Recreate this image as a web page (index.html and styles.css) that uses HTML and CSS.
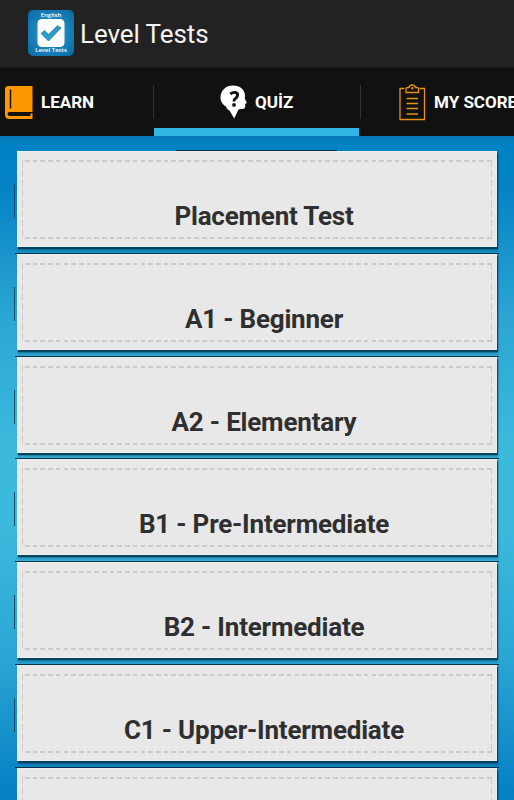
FILE: index.html
```
<!DOCTYPE html>
<html lang="en">
<head>
  <meta charset="UTF-8" />
  <meta name="viewport" content="width=device-width, initial-scale=1.0"/>
  <title>Level Tests</title>
  <link rel="stylesheet" href="styles.css">
</head>
<body>
  <header class="action-bar">
    <div class="app-icon">
      <span>English</span>
      <svg width="28" height="28" viewBox="0 0 28 28">
        <rect x="0.5" y="0" width="27" height="28" rx="4.5" fill="#fff"/>
        <path d="M4 14.5l3.5-3 4 4L20.500 6.500l3.500 2.500L11.500 22z" fill="#2b9ccb" stroke="#1979a8" stroke-width="0.7"/>
      </svg>
      <span>Level Tests</span>
    </div>
    <h1>Level Tests</h1>
  </header>

  <nav class="tabs">
    <a class="tab tab-learn">
      <svg width="29" height="35" viewBox="0 0 29 35">
        <path d="M4.500 1H28.500V27H6Q3.500 27 3.500 29t2.500 2H26.500V28.500H28.500V34H5.500Q1 34 1 29.500V4.500Q1 1 4.500 1z" fill="#ff9800"/>
        <path d="M6.500 4.500V23.500" stroke="#111" stroke-width="1.500"/>
      </svg>
      <span>LEARN</span>
    </a>
    <a class="tab tab-quiz active">
      <svg width="28" height="35" viewBox="0 0 28 35">
        <path d="M13 0.500C20 0.500 24.500 4.500 25 10L24.800 13.500L26.800 18L25.200 19L25.200 22Q24.500 24.500 22 23.800L18.500 24.500L14.200 33.500L9.500 25.500C8 25 6.500 23.500 6 21.500C2.500 19.500 0.300 16 0.500 12C1 5 6 0.500 13 0.500z" fill="#fff"/>
        <path d="M10.300 9Q13 7 15.500 7.500Q18 8.200 17.500 10.600Q17.200 12.200 15.500 13.400Q14 14.400 14 16.600" fill="none" stroke="#111" stroke-width="2.900"/>
        <circle cx="14" cy="19.900" r="1.900" fill="#111"/>
      </svg>
      <span>QUİZ</span>
    </a>
    <a class="tab tab-score">
      <svg width="27" height="37" viewBox="0 0 27 37" fill="none" stroke="#e8911a" stroke-width="1.300">
        <path d="M5.500 4.500H1V35.500H25.500V4.500H20.500"/>
        <path d="M7 8.500V4.500Q7 3.500 9 3.500H10Q10.500 1 13.200 1T16.500 3.500H18Q19.500 3.500 19.500 5V8.500z"/>
        <circle cx="13.300" cy="4.300" r="0.600"/>
        <path d="M7.500 14.500H19M7.500 19.500H19M7.500 24.500H19M7.500 30H19"/>
      </svg>
      <span>MY SCORE</span>
    </a>
  </nav>

  <main class="levels">
    <a class="card"><span class="stitch">Placement Test</span></a>
    <a class="card"><span class="stitch">A1 - Beginner</span></a>
    <a class="card"><span class="stitch">A2 - Elementary</span></a>
    <a class="card"><span class="stitch">B1 - Pre-Intermediate</span></a>
    <a class="card"><span class="stitch">B2 - Intermediate</span></a>
    <a class="card"><span class="stitch">C1 - Upper-Intermediate</span></a>
    <a class="card"><span class="stitch"></span></a>
  </main>
</body>
</html>
```

FILE: styles.css
```
* {
  box-sizing: border-box;
}
body {
  margin: 0;
  height: 800px;
  display: flex;
  flex-direction: column;
  overflow: hidden;
  font-family: Roboto, sans-serif;
  background: #111;
}
.action-bar {
  flex: none;
  display: flex;
  align-items: center;
  height: 68px;
  padding: 0 0 2px 28px;
  background: #222;
  border-bottom: 1px solid #1a1a1a;
}
.app-icon {
  display: flex;
  flex-direction: column;
  align-items: center;
  width: 46px;
  height: 46px;
  padding-top: 2px;
  border-radius: 5px;
  background: radial-gradient(circle, #2b9fd0, #0b67a5);
  font: 600 6px/7px "Open Sans", sans-serif;
  color: #fff;
  white-space: nowrap;
}
h1 {
  margin: 3px 0 0 6px;
  font-size: 26px;
  font-weight: 400;
  letter-spacing: -0.08px;
  color: #f3f3f3;
}
.tabs {
  flex: none;
  display: flex;
  height: 69px;
  overflow: hidden;
  color: #fff;
  font-size: 17px;
  font-weight: 700;
}
.tab {
  flex: none;
  position: relative;
  display: flex;
  align-items: center;
  width: 206px;
  height: 68px;
  white-space: nowrap;
}
.tab-learn {
  width: 154px;
  padding-left: 4px;
  gap: 8px;
}
.tab-quiz {
  padding-left: 66px;
  gap: 7px;
}
.tab-score {
  padding-left: 39px;
  gap: 8px;
}
.tab:not(:last-child)::after {
  content: "";
  position: absolute;
  right: 0;
  top: 17px;
  width: 1px;
  height: 34px;
  background: #333;
}
.tab-quiz.active::after {
  right: -1px;
}
.active::before {
  content: "";
  position: absolute;
  left: 0;
  bottom: 0;
  width: 205px;
  height: 8px;
  background: #33b5e5;
}
.levels {
  flex: 1;
  min-height: 0;
  overflow: hidden;
  padding: 15px 17px 0;
  margin-top: -1px;
  background: linear-gradient(#0878b8, #0082c4 10px, #0582c5 50px, #2ba5d2 180px, #3bbadd 310px, #3bbadd 390px, #2ba6d4 520px, #0d88c7 630px, #0480c3);
}
.card {
  position: relative;
  display: block;
  height: 96px;
  margin-bottom: 6.8px;
  padding: 9px 5px;
  background: #e8e8e8;
  box-shadow: inset 0 0 0 1px #efefef, 1px 2px 1px 0 rgba(0, 50, 75, 0.8), 1px 4px 2px 0 rgba(0, 60, 85, 0.3);
}
/* thin rule above each card */
.card::before {
  content: "";
  position: absolute;
  left: -2px;
  right: -2px;
  top: -1px;
  height: 1px;
  background: #043246;
}
.card:first-child::before {
  left: 159px;
  right: 160px;
}
/* tick beside the left edge */
.card::after {
  content: "";
  position: absolute;
  left: -3px;
  top: 33px;
  width: 1px;
  height: 34px;
  background: #07506f;
}
.stitch {
  display: block;
  height: 79px;
  padding: 41px 0 0 14px;
  background:
    repeating-linear-gradient(90deg, transparent 0 3px, #cbcbcb 3px 7.700px) 0 0 / 100% 2px no-repeat,
    repeating-linear-gradient(90deg, transparent 0 3px, #cbcbcb 3px 7.700px) 0 100% / 100% 2px no-repeat,
    repeating-linear-gradient(#cbcbcb 0 7px, transparent 7px 10px) 0 0 / 1px 100% no-repeat,
    repeating-linear-gradient(#cbcbcb 0 7px, transparent 7px 10px) 100% 0 / 1px 100% no-repeat;
  color: #2f2f2f;
  font-size: 26px;
  line-height: 30px;
  font-weight: 700;
  letter-spacing: -0.2px;
  text-align: center;
  white-space: nowrap;
}
```
